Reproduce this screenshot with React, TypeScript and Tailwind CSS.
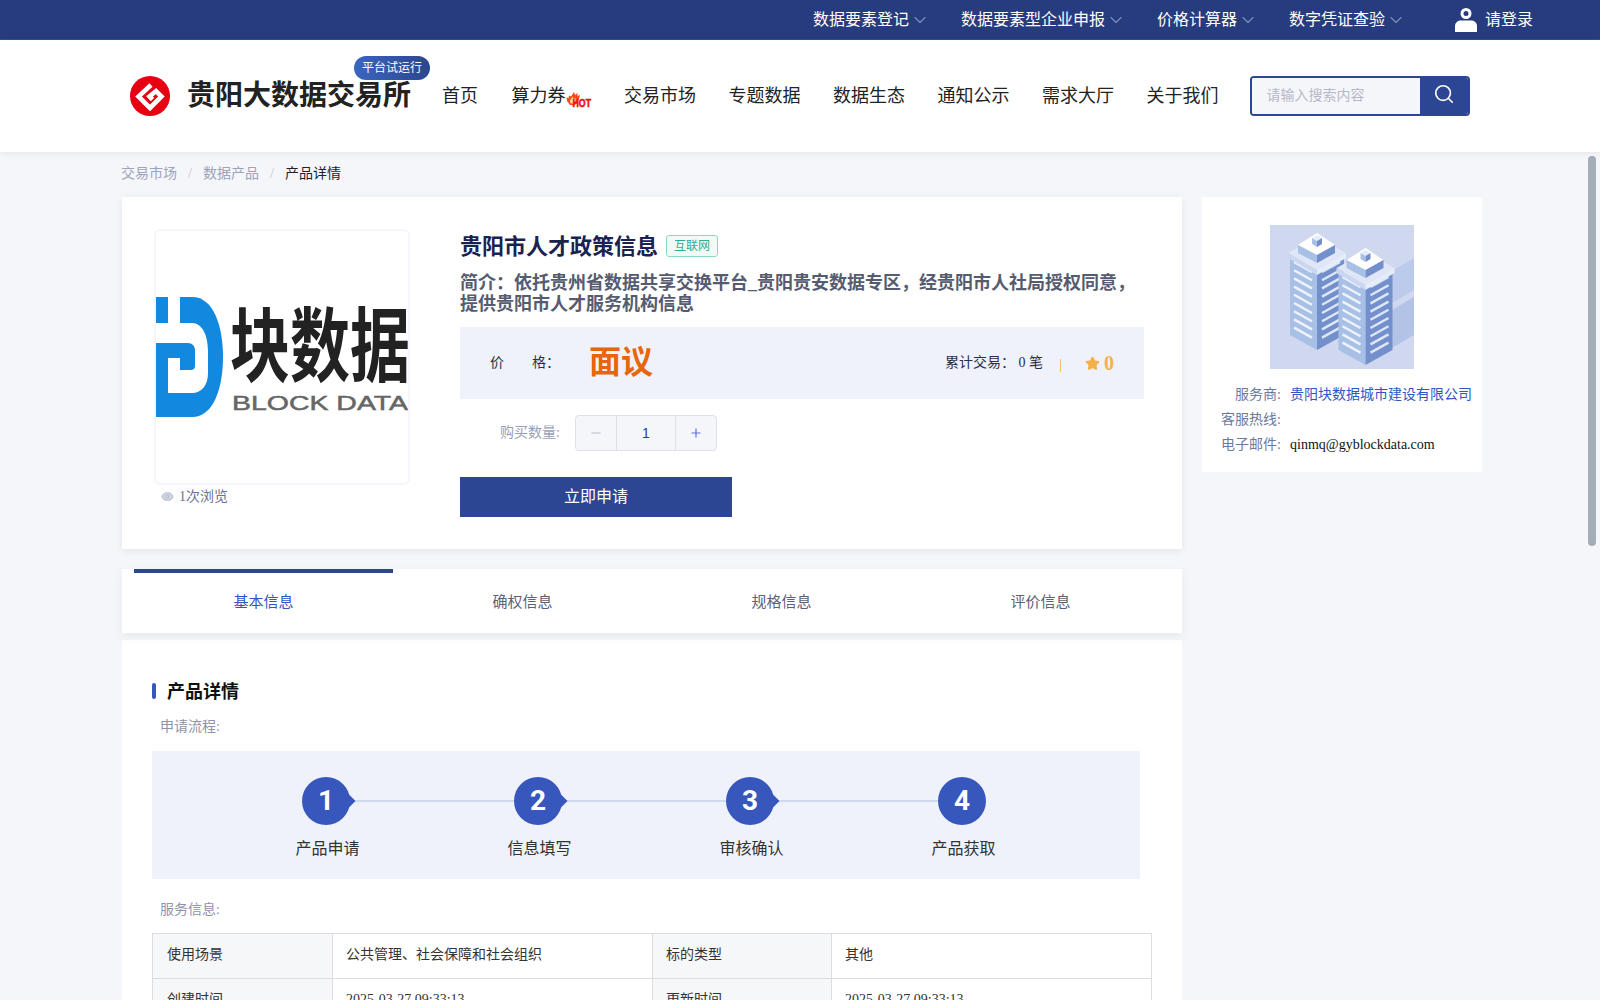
import React from "react";
import { ChevronDown, Search, Eye, Minus, Plus, Star } from "lucide-react";

const serif = "font-['Liberation_Serif','Noto_Sans_CJK_SC',serif]";

function GLogo() {
  return (
    <svg width="40" height="40" viewBox="0 0 40 40" className="shrink-0">
      <circle cx="20" cy="20" r="20" fill="#e60012" />
      <path d="M21 9 L8.5 20.5 L20 32 L31.5 20.5 L26 15 L19.5 20.5 L22.5 23.5" fill="none" stroke="#fff" strokeWidth="4.6" strokeLinejoin="miter" />
    </svg>
  );
}

function HotIcon() {
  return (
    <svg width="26" height="16" viewBox="0 0 26 16" className="shrink-0 mt-[7px] overflow-visible">
      <path d="M8 0 L9 3 L11.5 1 L11.5 4 L14 3 L13 7 L9 13 L4 13 L1 9 L0.5 5 L2.5 6.5 L3 3.5 L5 4.5 Z" fill="#ff4a1c" />
      <path d="M6.5 5 L8 7 L9.5 6 L9.5 9 L7.5 12 L4.5 11 L4 8.5 Z" fill="#ffe6a8" />
      <text x="6.5" y="14.5" fontSize="10" fontWeight="700" fontFamily="Liberation Sans" fill="#f10d0d" stroke="#f10d0d" strokeWidth="0.5" textLength="18.5" lengthAdjust="spacingAndGlyphs">HOT</text>
    </svg>
  );
}

function UserIcon() {
  return (
    <svg width="22" height="24" viewBox="0 0 22 24" className="shrink-0">
      <circle cx="11" cy="5.5" r="4" fill="none" stroke="#fff" strokeWidth="3" />
      <path d="M0 24 V18 C0 14.5 3 12.5 6 12.5 H16 C19 12.5 22 14.5 22 18 V24 Z" fill="#fff" />
    </svg>
  );
}

function BlockLogo() {
  return (
    <svg viewBox="0 0 252 252" className="block w-full h-full">
      <path d="M0 66 H36 C58 66 67 96 67 126 C67 156 58 186 36 186 H0 Z" fill="#1288de" />
      <rect x="12" y="66" width="12" height="26" fill="#fff" />
      <path d="M0 92 H36 C46 92 52 104 52 120 V142 C52 154 46 162 36 162 H12 V112 H0 Z" fill="#fff" />
      <path d="M0 112 H32 C36 112 39 115 39 119 V135 C39 138 37 139 35 139 H24 V127 H12 V186 H0 Z" fill="#1288de" />
      <text x="74" y="103" transform="scale(1 1.4)" fontSize="58" fontWeight="700" fontFamily="Noto Sans CJK SC" fill="#222" textLength="180" lengthAdjust="spacingAndGlyphs">块数据</text>
      <text x="76" y="179" fontSize="21" fontFamily="Liberation Sans" fill="#666" stroke="#666" strokeWidth="0.5" textLength="176" lengthAdjust="spacingAndGlyphs">BLOCK DATA</text>
    </svg>
  );
}

function Tower({ dx, dy }: { dx: number; dy: number }) {
  const rows = [0, 1, 2, 3, 4, 5, 6, 7, 8];
  return (
    <g transform={`translate(${dx} ${dy})`}>
      <polygon points="20,32 47,48 47,125 20,110" fill="#a9c0e6" />
      <polygon points="47,48 74,32 74,110 47,125" fill="#7390cc" />
      {rows.map((i) => (
        <g key={i}>
          <line x1="24" y1={37 + i * 8.2} x2="42" y2={47 + i * 8.2} stroke="#eef2fb" strokeWidth="2.4" />
          <line x1="52" y1={47 + i * 8.2} x2="70" y2={37 + i * 8.2} stroke="#dfe7f7" strokeWidth="2.4" />
        </g>
      ))}
      <polygon points="18,28 47,12 76,28 47,45" fill="#dfe6f7" />
      <polygon points="18,28 47,45 47,50 18,33" fill="#cbd7f0" />
      <polygon points="47,45 76,28 76,33 47,50" fill="#e6ecf9" />
      <polygon points="28,20 47,8 65,20 47,30" fill="#ffffff" />
      <polygon points="28,20 47,30 47,38 28,28" fill="#a9c0e6" />
      <polygon points="47,30 65,20 65,28 47,38" fill="#7390cc" />
      <polygon points="42,13 47,10 52,13 47,16" fill="#e6ecf9" />
      <polygon points="42,13 47,16 47,22 42,19" fill="#a9c0e6" />
      <polygon points="47,16 52,13 52,19 47,22" fill="#7390cc" />
    </g>
  );
}

function Buildings() {
  return (
    <svg width="144" height="144" viewBox="0 0 144 144" className="block">
      <rect width="144" height="144" fill="#d0d8f0" />
      <polygon points="120,47 144,33 144,65 120,79" fill="#bccbeb" />
      <polygon points="120,86 144,72 144,110 120,124" fill="#b3c3e8" />
      <Tower dx={0} dy={0} />
      <Tower dx={48.5} dy={15} />
    </svg>
  );
}

const topItems = ["数据要素登记", "数据要素型企业申报", "价格计算器", "数字凭证查验"];
const navItems = ["交易市场", "专题数据", "数据生态", "通知公示", "需求大厅", "关于我们"];
const steps = ["产品申请", "信息填写", "审核确认", "产品获取"];
const tabs = ["基本信息", "确权信息", "规格信息", "评价信息"];

function Step({ n, last }: { n: number; last: boolean }) {
  return (
    <>
      <div className="relative w-12 h-12 shrink-0 rounded-full bg-[#3757bd] flex items-center justify-center">
        {!last && <span className="absolute right-[-3px] top-[18px] w-3 h-3 rotate-45 bg-[#3757bd]" />}
        <span className="relative text-white text-[28px] font-bold font-['Roboto',sans-serif]">{n}</span>
      </div>
      {!last && <div className="w-[164px] h-0.5 bg-[#d0d8f0]" />}
    </>
  );
}

export default function App() {
  return (
    <div className={`relative h-screen w-full overflow-hidden bg-[#f5f6fa] ${serif}`}>
      <div className="h-10 bg-[#273c7e] border-b border-[#28567e] flex items-center justify-end pr-[67px] text-white text-base">
        {topItems.map((t) => (
          <div key={t} className="flex items-center mr-[31px] last:mr-0">
            <span>{t}</span>
            <ChevronDown size={20} strokeWidth={1.4} className="ml-px text-[#7d8cb8]" />
          </div>
        ))}
        <div className="flex items-center ml-[18px] gap-2">
          <UserIcon />
          <span>请登录</span>
        </div>
      </div>

      <header className="relative z-10 h-[112px] bg-white shadow-[0_2px_6px_rgba(0,0,0,0.06)] flex items-center pl-[130px]">
        <GLogo />
        <div className="relative ml-[17px] w-[224px] text-[28px] font-bold text-[#222] leading-none whitespace-nowrap">
          贵阳大数据交易所
          <span className="absolute left-[167px] top-[-26px] w-[76px] h-6 rounded-full bg-gradient-to-r from-[#3c65bf] to-[#2b4690] text-white text-xs font-normal flex items-center justify-center">平台试运行</span>
        </div>
        <nav className="ml-[31px] flex items-center gap-[32.5px] text-[18px] text-[#222]">
          <span>首页</span>
          <span className="flex items-center ml-px">算力券<HotIcon /></span>
          {navItems.map((t) => <span key={t}>{t}</span>)}
        </nav>
        <div className="ml-[31px] w-[220px] h-10 rounded border-2 border-[#2c4694] flex overflow-hidden">
          <input placeholder="请输入搜索内容" className="w-[168px] bg-[#f5f6fa] pl-[15px] text-sm outline-none placeholder:text-[#b5b8c8]" />
          <div className="flex-1 bg-[#2c4694] flex items-center justify-center pb-1">
            <Search size={22} className="text-white" strokeWidth={1.8} />
          </div>
        </div>
      </header>

      <div className="h-[45px] pl-[121px] pb-[2px] flex items-center text-sm text-[#9ca3bb]">
        <span>交易市场</span>
        <span className="w-[26px] text-center text-[#c0c5d4]">/</span>
        <span>数据产品</span>
        <span className="w-[26px] text-center text-[#c0c5d4]">/</span>
        <span className="text-[#1f2329]">产品详情</span>
      </div>

      <div className="flex items-start pl-[122px] gap-5">
        <div className="w-[1060px] shrink-0">
          <section className="h-[352px] bg-white shadow-[0_2px_8px_rgba(0,0,0,0.07)] flex pl-8 pt-8">
            <div className="w-[256px] shrink-0">
              <div className="w-[256px] h-[256px] border-2 border-[#f5f6fb] rounded-[6px] overflow-hidden bg-white">
                <BlockLogo />
              </div>
              <div className="flex items-center pl-[7px] h-[23px] text-sm text-[#6b7390]">
                <Eye size={13} className="text-[#b8bdd0]" fill="#d5d8e4" />
                <span className="ml-[5px]">1次浏览</span>
              </div>
            </div>
            <div className="ml-[50px] w-[684px] pt-[2px]">
              <div className="flex items-center h-[30px]">
                <h1 className="text-[22px] font-bold text-[#1a2350]">贵阳市人才政策信息</h1>
                <span className="ml-2 w-[52px] h-[22px] rounded-[3px] border border-[#8fd8c0] bg-[#f0faf6] text-xs text-[#35ab8c] flex items-center justify-center">互联网</span>
              </div>
              <p className="mt-3 text-[18px] leading-[21px] font-bold text-[#565c70]">简介：依托贵州省数据共享交换平台_贵阳贵安数据专区，经贵阳市人社局授权同意，提供贵阳市人才服务机构信息</p>
              <div className="mt-3 h-[72px] bg-[#eff2fb] flex items-center pl-[30px] pr-[30px] text-sm text-[#2a2f42]">
                <div className="w-[99px] flex">
                  <span className="w-[42px]">价</span>
                  <span>格：</span>
                </div>
                <span className="text-[32px] text-[#e8650a] font-bold">面议</span>
                <span className="ml-auto">累计交易：&nbsp;0 笔</span>
                <span className="ml-[17px] w-px h-[13px] mt-1 bg-[#f0c070]" />
                <Star size={15} className="ml-[24px] text-[#f5b04c]" fill="#f5b04c" />
                <span className="ml-1 text-[20px] font-bold text-[#f5b04c]">0</span>
              </div>
              <div className="mt-4 flex items-center">
                <span className="w-[100px] text-right text-sm text-[#9a9fb5]">购买数量:</span>
                <div className="ml-[15px] w-[142px] h-9 rounded border border-[#dfe1ea] bg-[#f5f6fa] flex items-stretch">
                  <div className="w-[41px] flex items-center justify-center border-r border-[#dfe1ea]">
                    <Minus size={14} className="text-[#b8bcd0]" />
                  </div>
                  <div className="w-[59px] flex items-center justify-center border-r border-[#dfe1ea] text-sm text-[#3a3f52] font-['Liberation_Sans',sans-serif]">1</div>
                  <div className="flex-1 flex items-center justify-center">
                    <Plus size={14} className="text-[#5b6ee8]" />
                  </div>
                </div>
              </div>
              <button className="mt-[26px] w-[272px] h-10 bg-[#2c4694] text-white text-base">立即申请</button>
            </div>
          </section>

          <section className="relative z-10 mt-5 h-16 bg-white shadow-[0_4px_10px_rgba(0,0,0,0.06)] px-3 grid grid-cols-4">
            {tabs.map((t, i) => (
              <div key={t} className={`flex items-center justify-center text-[15px] border-t-4 pb-0.5 ${i === 0 ? "border-[#2c4694] text-[#3056c4]" : "border-transparent text-[#5b6278]"}`}>{t}</div>
            ))}
          </section>

          <section className="mt-[7px] bg-white pt-[39px] pl-[30px] pb-10">
            <div className="flex items-center h-6">
              <span className="w-1 h-4 rounded-sm bg-[#3757c0]" />
              <h2 className="ml-[11px] pt-[2px] text-[18px] font-bold text-[#111]">产品详情</h2>
            </div>
            <div className="mt-[14px] pl-2 h-5 leading-5 text-sm text-[#8e94ab]">申请流程:</div>
            <div className="mt-[14px] w-[988px] h-[128px] bg-[#eff2fb] pt-[26px] font-['Noto_Sans_CJK_SC',sans-serif]">
              <div className="pl-[150px] flex items-center">
                {steps.map((s, i) => <Step key={s} n={i + 1} last={i === 3} />)}
              </div>
              <div className="pl-[68px] mt-[10px] grid grid-cols-[repeat(4,212px)] text-center text-base leading-6 text-[#333]">
                {steps.map((s) => <span key={s} className="pl-[3px]">{s}</span>)}
              </div>
            </div>
            <div className="mt-[21px] pl-2 h-5 leading-5 text-sm text-[#8e94ab]">服务信息:</div>
            <table className="mt-[13px] w-[999px] table-fixed border-collapse text-sm text-[#333]">
              <colgroup>
                <col className="w-[180px]" />
                <col className="w-[320px]" />
                <col className="w-[179px]" />
                <col className="w-[320px]" />
              </colgroup>
              <tbody>
                <tr className="h-[45px]">
                  <td className="border border-[#dcdce2] bg-[#f6f7f9] pl-[14px] pb-[2px]">使用场景</td>
                  <td className="border border-[#dcdce2] pl-[13px] pb-[2px]">公共管理、社会保障和社会组织</td>
                  <td className="border border-[#dcdce2] bg-[#f6f7f9] pl-[13px] pb-[2px]">标的类型</td>
                  <td className="border border-[#dcdce2] pl-[13px] pb-[2px]">其他</td>
                </tr>
                <tr className="h-[45px]">
                  <td className="border border-[#dcdce2] bg-[#f6f7f9] pl-[14px] pb-[2px]">创建时间</td>
                  <td className="border border-[#dcdce2] pl-[13px] pb-[2px]">2025-03-27 09:33:13</td>
                  <td className="border border-[#dcdce2] bg-[#f6f7f9] pl-[13px] pb-[2px]">更新时间</td>
                  <td className="border border-[#dcdce2] pl-[13px] pb-[2px]">2025-03-27 09:33:13</td>
                </tr>
              </tbody>
            </table>
          </section>
        </div>

        <aside className="w-[280px] shrink-0 h-[275px] bg-white pt-7 text-sm">
          <div className="flex justify-center"><Buildings /></div>
          <div className="mt-[13px] grid grid-cols-[80px_1fr] gap-x-2 leading-[25px]">
            <span className="text-right pr-px text-[#6b7a9a]">服务商:</span>
            <span className="text-[#3056c4] whitespace-nowrap">贵阳块数据城市建设有限公司</span>
            <span className="text-right pr-px text-[#6b7a9a]">客服热线:</span>
            <span />
            <span className="text-right pr-px text-[#6b7a9a]">电子邮件:</span>
            <span className="text-[#111]">qinmq@gyblockdata.com</span>
          </div>
        </aside>
      </div>

      <div className="absolute right-1 top-[156px] w-2 h-[390px] rounded-full bg-[#a4acb7]" />
    </div>
  );
}
